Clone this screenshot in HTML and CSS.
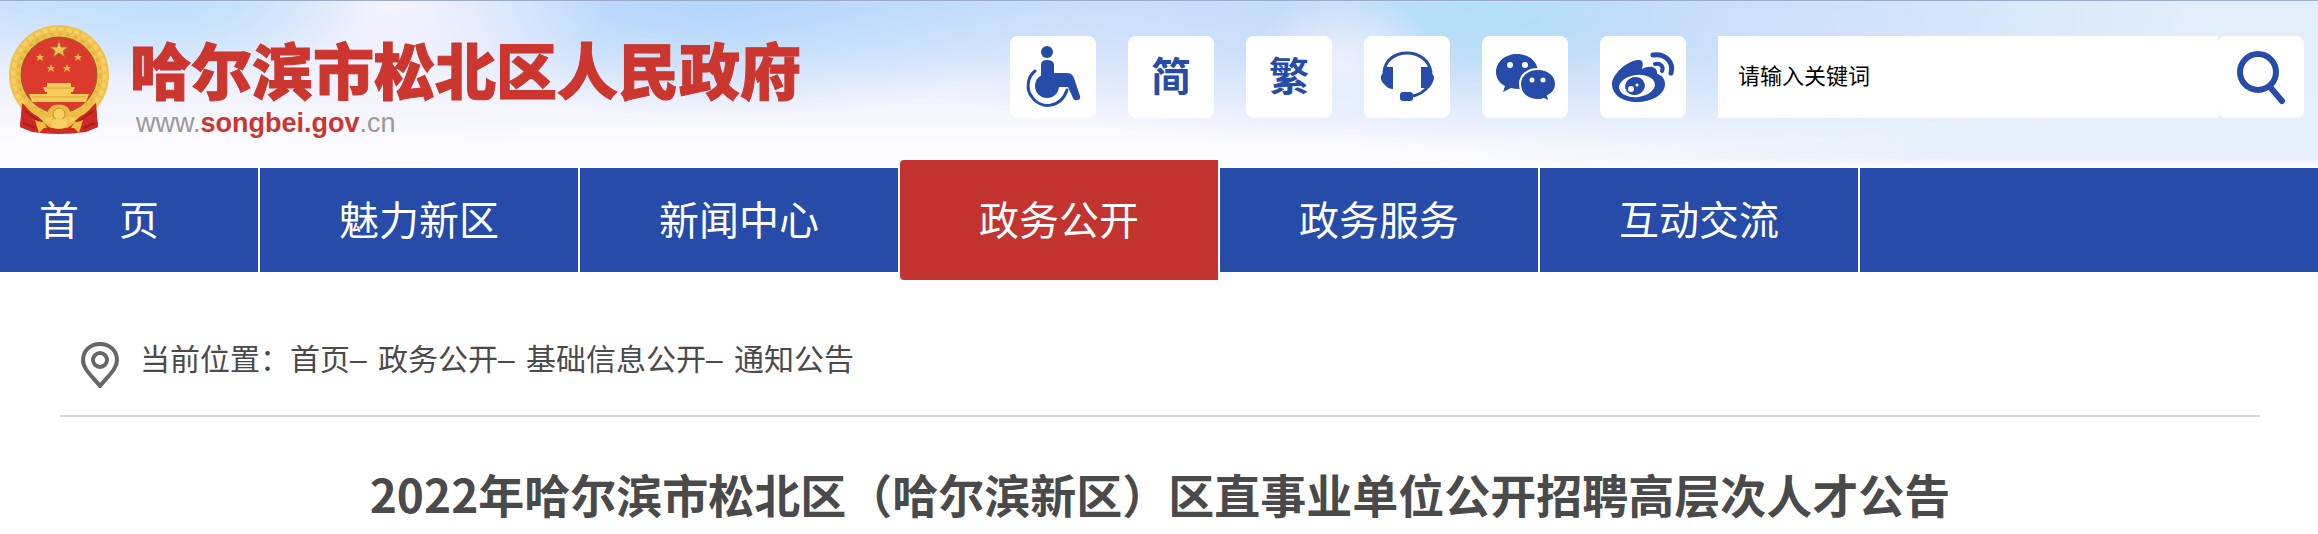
FILE: index.html
```html
<!DOCTYPE html>
<html lang="zh-CN">
<head>
    <meta charset="UTF-8">
    <meta name="viewport" content="width=device-width, initial-scale=1.0">
    <title>哈尔滨市松北区人民政府</title>
    <link rel="stylesheet" href="styles.css">
</head>
<body>
    <header class="header">
        <a href="#" class="brand">
            <svg class="emblem" viewBox="0 0 102 109" aria-hidden="true">
                <path d="M15 76 L12 102 L24 107 Q51 111 78 107 L90 102 L87 76 Z" fill="#cc2a22"/>
                <circle cx="51" cy="50" r="50" fill="#efc24e"/>
                <circle cx="51" cy="50" r="46" fill="none" stroke="#f5d066" stroke-width="4" stroke-dasharray="5 3"/>
                <circle cx="51" cy="50" r="41" fill="none" stroke="#e5b240" stroke-width="3" stroke-dasharray="4 4"/>
                <path d="M14 78 L12 102 L28 107 L35 96 L24 86 Z M88 78 L90 102 L74 107 L67 96 L78 86 Z" fill="#cc2a22"/>
                <path d="M17 86 L31 96 M85 86 L71 96 M15 98 L27 103 M87 98 L75 103" stroke="#a81d19" stroke-width="2"/>
                <circle cx="51" cy="50" r="38" fill="#dc3a2c" stroke="#8a642e" stroke-width="1"/>
                <path d="M51 15 L53 22 L60 22 L55 26 L57 32 L51 28 L45 32 L47 26 L42 22 L49 22 Z" fill="#f0c552" stroke="#a8702c" stroke-width="1"/>
                <g fill="#e9b64a">
                    <path d="M32 28 L33 31 L36 31 L34 33 L35 36 L32 34 L29 36 L30 33 L28 31 L31 31 Z"/>
                    <path d="M70 28 L71 31 L74 31 L72 33 L73 36 L70 34 L67 36 L68 33 L66 31 L69 31 Z"/>
                    <path d="M43 39 L44 42 L47 42 L45 44 L46 47 L43 45 L40 47 L41 44 L39 42 L42 42 Z"/>
                    <path d="M59 39 L60 42 L63 42 L61 44 L62 47 L59 45 L56 47 L57 44 L55 42 L58 42 Z"/>
                </g>
                <path d="M39 58 H63 V62 H67 L65 67 H63 V69 H81 L78 77 H24 L21 69 H39 V67 H37 L35 62 H39 Z" fill="#f5cc58"/>
                <path d="M38 63 H64 M24 72 H78" stroke="#dca13a" stroke-width="1"/>
                <path d="M18 78 Q30 94 42 89 Q43 82 51 82 Q59 82 60 89 Q72 94 84 78" fill="none" stroke="#edbc43" stroke-width="5"/>
                <circle cx="51" cy="89" r="6" fill="#f6d060" stroke="#c78b2c" stroke-width="1"/>
                <path d="M27 95 Q39 100 44 96 Q51 91 58 96 Q63 100 75 95 L71 108 L66 103 Q58 102 51 105 Q44 102 36 103 L31 108 Z" fill="#edbd43"/>
                <path d="M36 98 L42 107 H60 L66 98 Q58 106 51 103 Q44 106 36 98" fill="#cc2a22"/>
                <ellipse cx="51" cy="99" rx="8" ry="5" fill="#f6d060"/>
            </svg>
            <span class="brand-text">
                <span class="brand-name">哈尔滨市松北区人民政府</span>
                <span class="brand-url">www.<b>songbei.gov</b>.cn</span>
            </span>
        </a>

        <div class="tools">
            <a href="#" class="tool" aria-label="无障碍浏览">
                <svg viewBox="0 0 86 82">
                    <circle cx="37" cy="16" r="6"/>
                    <circle cx="37" cy="50" r="12"/>
                    <path d="M31 29 Q31 24 37 24 Q44 24 44 29 V37 H57 Q62 37 64 42 L70 60 Q71 64 67 64 Q64 65 63 62 L58 51 H31 Z"/>
                    <path class="line" stroke-width="3" d="M25 35 C17 41 16 54 22 61 C31 74 51 72 57 54"/>
                </svg>
            </a>
            <a href="#" class="tool">简</a>
            <a href="#" class="tool">繁</a>
            <a href="#" class="tool" aria-label="在线咨询">
                <svg viewBox="0 0 86 82">
                    <path class="line" stroke-width="3" d="M20 36 C21 24 31 17 43 17 S65 24 67 36"/>
                    <path d="M22 31 H29 V53 Q24 53 21 49 Q16 45 17 40 Q19 37 22 31 Z"/>
                    <path d="M65 31 H57 V52 H65 Q70 46 70 41 Q68 37 65 31 Z"/>
                    <path class="line" stroke-width="3" d="M66 48 Q58 60 46 60"/>
                    <rect x="36" y="56" width="13" height="9" rx="3"/>
                </svg>
            </a>
            <a href="#" class="tool" aria-label="微信">
                <svg viewBox="0 0 86 82">
                    <path d="M35 18 C23 18 14 26 14 36 C14 42 17 47 23 50 L21 56 L29 52 Q32 53 38 53 C49 52 56 45 56 36 C56 26 47 18 35 18 Z"/>
                    <path class="bubble" d="M56 33 C46 33 38 39 38 48 C38 58 46 64 56 64 Q60 64 62 63 L68 66 L66 60 Q74 56 74 48 C74 39 66 33 56 33 Z"/>
                    <g fill="#fff">
                        <circle cx="28" cy="29" r="3"/>
                        <circle cx="43" cy="29" r="3"/>
                        <circle cx="50" cy="44" r="2.5"/>
                        <circle cx="61" cy="44" r="2.5"/>
                    </g>
                </svg>
            </a>
            <a href="#" class="tool" aria-label="微博">
                <svg viewBox="0 0 86 82">
                    <path d="M38 24 C44 23 43 29 42 33 C49 29 58 30 57 38 C62 39 65 43 65 48 C65 59 51 66 37 66 C23 66 12 59 12 48 C12 39 26 25 38 24 Z"/>
                    <ellipse cx="37" cy="50" rx="18" ry="11" fill="#fff" transform="rotate(-7 37 50)"/>
                    <ellipse cx="35" cy="50" rx="10" ry="9" transform="rotate(-15 35 50)"/>
                    <circle cx="31" cy="53" r="3" fill="#fff"/>
                    <circle cx="37" cy="49" r="1.5" fill="#fff"/>
                    <path class="line" stroke-width="5" d="M53 19 C66 17 74 27 71 37"/>
                    <path class="line" stroke-width="4" d="M55 28 C61 27 64 31 62 35"/>
                </svg>
            </a>
            <form class="search">
                <input type="text" class="search-input" placeholder="请输入关键词" aria-label="请输入关键词">
                <button type="button" class="search-btn" aria-label="搜索">
                    <svg viewBox="0 0 86 82">
                        <circle class="line" cx="40" cy="36" r="18" stroke-width="6"/>
                        <path class="line" stroke-width="6" d="M52 51 L64 65"/>
                    </svg>
                </button>
            </form>
        </div>
    </header>

    <nav class="nav">
        <a href="#" class="nav-item nav-home">首　页</a>
        <a href="#" class="nav-item">魅力新区</a>
        <a href="#" class="nav-item">新闻中心</a>
        <a href="#" class="nav-item active">政务公开</a>
        <a href="#" class="nav-item">政务服务</a>
        <a href="#" class="nav-item">互动交流</a>
    </nav>

    <main class="content">
        <div class="breadcrumb">
            <svg class="pin" viewBox="0 0 38 46" aria-hidden="true">
                <path d="M19 2 C9 2 2 9 2 18 C2 27 11 34 19 44 C27 34 36 27 36 18 C36 9 29 2 19 2 Z"/>
                <circle cx="19" cy="18" r="7"/>
            </svg>
            <div>当前位置：<a href="#">首页</a>– <a href="#">政务公开</a>– <a href="#">基础信息公开</a>– <a href="#">通知公告</a></div>
        </div>
        <h1>2022年哈尔滨市松北区（哈尔滨新区）区直事业单位公开招聘高层次人才公告</h1>
    </main>
</body>
</html>
```
FILE: styles.css
```css
* {
    box-sizing: border-box;
}
body {
    margin: 0;
    font-family: "Liberation Sans", "Noto Sans CJK SC", sans-serif;
    background: #fff;
    color: #4a4a4a;
}
a {
    color: inherit;
    text-decoration: none;
}
.header {
    display: flex;
    justify-content: space-between;
    align-items: flex-start;
    padding: 24px 14px 29px 8px;
    border-top: 1px solid #9dacc8;
    background:
        linear-gradient(to top, #fff 0, rgba(255,255,255,0) 10px),
        radial-gradient(ellipse 9% 50% at 7% 0, #bfe0fc, rgba(191,224,252,0)),
        radial-gradient(ellipse 9% 100% at 17% 0, #f6f4fe, rgba(246,244,254,0)),
        radial-gradient(ellipse 16% 70% at 31% 0, #b3d6fb, rgba(179,214,251,0)),
        radial-gradient(ellipse 4% 45% at 58% 38%, #eef1fd, rgba(238,241,253,0)),
        radial-gradient(ellipse 8% 50% at 64% 0, #b2e1f7, rgba(178,225,247,0)),
        radial-gradient(ellipse 30% 75% at 65% 15%, #bfd9f9, rgba(191,217,249,0)),
        linear-gradient(to right, rgba(228,238,250,0) 60%, rgba(228,238,250,0.9) 85%),
        linear-gradient(#cde0fb, #eef1fd 50%, #fcfbff 85%);
}

/* logo */
.brand {
    display: flex;
    align-items: flex-start;
    gap: 20px;
}
.emblem {
    width: 102px;
    height: 109px;
}
.brand-text {
    display: flex;
    flex-direction: column;
    gap: 2px;
    padding-top: 19px;
}
.brand-name {
    font-size: 61px;
    line-height: 61px;
    font-weight: 900;
    color: #cb362e;
    -webkit-text-stroke: 1px #cb362e;
    white-space: nowrap;
}
.brand-url {
    padding-left: 6px;
    font-size: 27px;
    line-height: 32px;
    color: #999;
}
.brand-url b {
    color: #cb362e;
}

/* toolbar */
.tools {
    display: flex;
    gap: 32px;
    margin-top: 11px;
}
.tool,
.search-btn {
    display: flex;
    align-items: center;
    justify-content: center;
    width: 86px;
    height: 82px;
    border-radius: 8px;
    background: #fff;
    color: #264ba9;
    font-size: 40px;
    line-height: 40px;
    font-weight: bold;
}
.tool svg,
.search-btn svg {
    width: 86px;
    height: 82px;
    fill: #264ba9;
}
.tools .line {
    fill: none;
    stroke: #264ba9;
    stroke-linecap: round;
}
.bubble {
    stroke: #fff;
    stroke-width: 2;
}
.search {
    display: flex;
}
.search-input {
    width: 500px;
    height: 82px;
    padding: 0 20px;
    border: none;
    background: #fff;
    font-family: inherit;
    font-size: 22px;
    color: #000;
}
.search-input::placeholder {
    color: #000;
    opacity: 1;
}
.search-btn {
    padding: 0;
    border: none;
    cursor: pointer;
}

/* main menu */
.nav {
    display: flex;
    height: 104px;
    background: #264ba9;
}
.nav-item {
    display: flex;
    align-items: center;
    justify-content: center;
    width: 320px;
    padding-bottom: 5px;
    border-right: 2px solid #fff;
    color: #fff;
    font-size: 40px;
    white-space: nowrap;
}
.nav-home {
    justify-content: flex-start;
    width: 260px;
    padding-left: 39px;
}
.nav-item.active {
    margin: -8px 0;
    background: #c33430;
    background-clip: padding-box;
    border-radius: 4px 0 0 4px;
}

/* article */
.content {
    padding: 0 58px 0 60px;
}
.breadcrumb {
    display: flex;
    gap: 21px;
    padding: 70px 21px 27px;
    border-bottom: 2px solid #d5d5d5;
    font-size: 30px;
    line-height: 36px;
}
.breadcrumb a + a {
    margin-left: 3px;
}
.pin {
    width: 38px;
    height: 46px;
    fill: none;
    stroke: #666;
    stroke-width: 4;
}
h1 {
    margin: 46px 0 0;
    font-family: "Noto Sans CJK SC", sans-serif;
    font-size: 46px;
    line-height: 60px;
    text-align: center;
}
```
